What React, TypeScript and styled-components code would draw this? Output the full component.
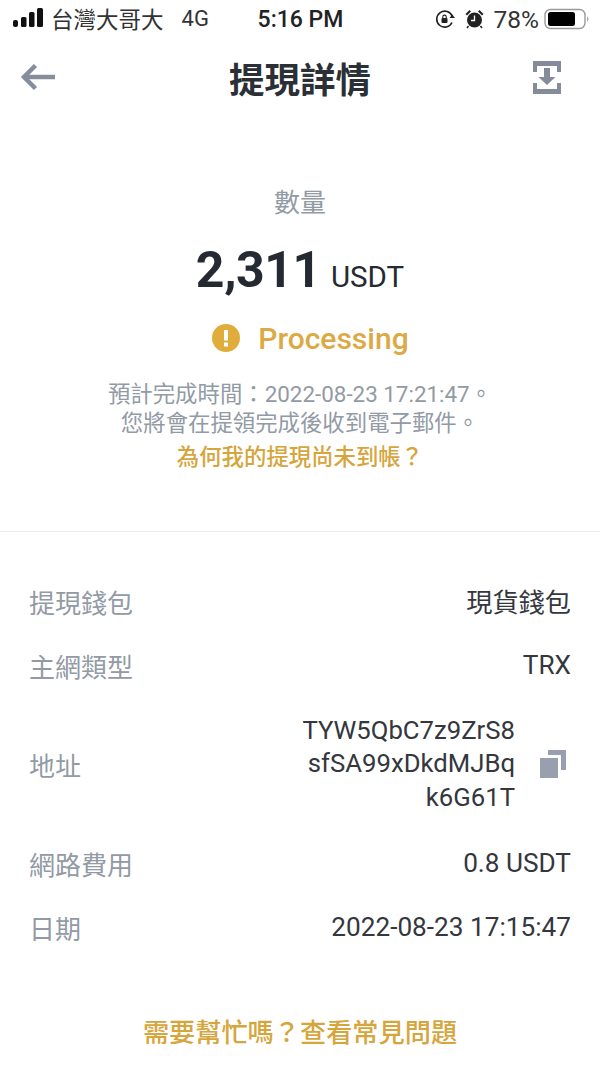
import React from 'react';
import styled, { createGlobalStyle } from 'styled-components';

const GlobalStyle = createGlobalStyle`
  html, body {
    margin: 0;
    padding: 0;
    background: #fff;
  }
  body {
    font-family: Roboto, 'Noto Sans CJK TC', sans-serif;
  }
`;

const Page = styled.div`
  width: 600px;
  height: 1065px;
  overflow: hidden;
  display: flex;
  flex-direction: column;
  background: #fff;
`;

const StatusBar = styled.div`
  height: 38px;
  padding: 0 11px 0 12px;
  display: grid;
  grid-template-columns: 1fr auto 1fr;
  align-items: center;
  color: #1a1a1c;
`;
const StatusLeft = styled.div`
  display: flex;
  align-items: center;
  color: #333;
`;
const Carrier = styled.span`
  margin: 0 0 3px 7px;
  font-family: 'Noto Sans CJK TC', sans-serif;
  font-size: 22.5px;
  line-height: 30px;
`;
const Network = styled.span`
  margin-left: 18px;
  font-size: 22px;
  line-height: 30px;
`;
const Clock = styled.div`
  font-size: 23px;
  font-weight: 500;
  color: #222;
`;
const StatusRight = styled.div`
  display: flex;
  align-items: center;
  justify-content: flex-end;
  gap: 10px;
  font-size: 24.5px;
  color: #333;
`;
const BatterySvg = styled.svg`
  margin-left: -5px;
`;

const Header = styled.header`
  height: 78px;
  padding: 0 20px;
  display: grid;
  grid-template-columns: 1fr auto 1fr;
  align-items: center;
`;
const HeaderAction = styled.div`
  padding-right: 19px;
  display: flex;
  justify-content: flex-end;
`;
const Title = styled.h1`
  margin: 0;
  font-family: 'Noto Sans CJK TC', sans-serif;
  font-size: 35.5px;
  font-weight: 700;
  color: #2b2f36;
`;
const Summary = styled.section`
  height: 416px;
  box-sizing: border-box;
  padding-top: 66px;
  display: flex;
  flex-direction: column;
  align-items: center;
  border-bottom: 1px solid #eaecef;
`;
const AmountLabel = styled.div`
  font-family: 'Noto Sans CJK TC', sans-serif;
  font-size: 26px;
  line-height: 38px;
  color: #929aa5;
`;
const Amount = styled.div`
  margin-top: 19px;
  height: 62px;
  display: flex;
  align-items: baseline;
  gap: 10px;
  color: #252932;
`;
const AmountValue = styled.span`
  font-size: 50px;
  line-height: 62px;
  font-weight: 700;
  letter-spacing: -0.4px;
`;
const AmountUnit = styled.span`
  font-size: 29.5px;
  font-weight: 400;
`;
const Status = styled.div`
  margin: 17px 0 0 21px;
  height: 40px;
  display: flex;
  align-items: center;
  gap: 18px;
  color: #dcaa45;
  font-size: 30px;
  font-weight: 500;
`;
const Note = styled.div`
  margin-top: 22px;
  font-size: 22.4px;
  line-height: 29px;
  color: #929aa5;
  text-align: center;
`;
const HelpLink = styled.div`
  font-family: 'Noto Sans CJK TC', sans-serif;
  font-size: 22.4px;
  line-height: 34px;
  font-weight: 500;
  color: #d6a53c;
`;

const Details = styled.section`
  padding: 37px 29px 0;
  display: flex;
  flex-direction: column;
`;
const Row = styled.div<{ $height: number }>`
  height: ${(p) => p.$height}px;
  display: flex;
  align-items: center;
  justify-content: space-between;
`;
const RowLabel = styled.span`
  font-family: 'Noto Sans CJK TC', sans-serif;
  font-size: 26px;
  color: #929aa5;
`;
const RowValue = styled.span`
  font-size: 26.2px;
  color: #34373d;
  text-align: right;
`;
const AddressWrap = styled.div`
  padding-right: 5px;
  display: flex;
  align-items: center;
  gap: 25px;
`;
const AddressText = styled(RowValue)`
  line-height: 33.5px;
  font-size: 25.7px;
`;
const Footer = styled.div`
  margin-top: 52px;
  text-align: center;
  font-family: 'Noto Sans CJK TC', sans-serif;
  font-size: 26.2px;
  font-weight: 500;
  line-height: 40px;
  color: #d6a53c;
`;

const SignalIcon = () => (
  <svg width="32" height="22" viewBox="0 0 32 22" fill="#111">
    <rect x="1" y="12" width="5" height="7" rx="2" />
    <rect x="9" y="9" width="5.500" height="10" rx="1.500" />
    <rect x="17" y="4" width="5.500" height="15" rx="1.500" />
    <rect x="25" y="0" width="6" height="19" rx="1.500" />
  </svg>
);

const RotationIcon = () => (
  <svg width="20" height="20" viewBox="0 0 20 20" fill="none" stroke="#222">
    <path d="M17 13.500A8 8 0 1 1 17.300 7.500" strokeWidth="1.600" />
    <path d="M14.500 9h5.500l-2.700-3.500z" fill="#222" stroke="none" />
    <rect x="6.500" y="9" width="6" height="5" rx="1" fill="#222" stroke="none" />
    <path d="M7.800 9V7.800a1.700 1.700 0 0 1 3.400 0V9" strokeWidth="1.100" />
  </svg>
);

const AlarmIcon = () => (
  <svg width="19" height="20" viewBox="0 0 19 20" fill="#222">
    <circle cx="9.500" cy="11" r="7.500" />
    <path d="M.5 5 4.500 1l1.500 1.500L2 6.500zM18.500 5l-4-4L13 2.500l4 4z" />
    <path d="M3.500 17 2 19M15.500 17l1.500 2" stroke="#222" strokeWidth="1.500" />
    <path d="M9.500 6.500v5H6" stroke="#fff" strokeWidth="1.300" fill="none" />
  </svg>
);

const BatteryIcon = () => (
  <BatterySvg width="45" height="22" viewBox="0 0 45 22">
    <rect x="1" y="1.500" width="40" height="19" rx="5.500" fill="none" stroke="#9a9a9a" strokeWidth="1.400" />
    <rect x="4" y="4" width="27" height="14" rx="2.500" fill="#000" />
    <path d="M43 8.500v5c1-.3 1.500-1.300 1.500-2.500s-.5-2.200-1.500-2.500z" fill="#aaa" />
  </BatterySvg>
);

const BackIcon = () => (
  <svg width="36" height="28" viewBox="0 0 36 28" fill="none" stroke="#868e9c" strokeWidth="4.500">
    <path d="M35 14H5" />
    <path d="M15.500 2.500 4 14l11.500 11.500" />
  </svg>
);

const ExportIcon = () => (
  <svg width="28" height="33" viewBox="0 0 28 33" fill="#868b99">
    <path d="M0 0h28v11h-4V5H4v6H0z" />
    <path d="M0 33h28V22h-4v6H4v-6H0z" />
    <path d="M11 7h6v9h5.500L14 24 5.500 16H11z" />
  </svg>
);

const WarningIcon = () => (
  <svg width="28" height="28" viewBox="0 0 28 28">
    <circle cx="14" cy="14" r="14" fill="#e0ad3c" />
    <rect x="12" y="6" width="4" height="10.500" fill="#fff" />
    <rect x="12" y="18.500" width="4" height="4" fill="#fff" />
  </svg>
);

const CopyIcon = () => (
  <svg width="26" height="28" viewBox="0 0 26 28" fill="#9a9fb0">
    <rect x="0" y="8" width="18" height="20" />
    <path d="M8 0h18v20h-5V5H8z" />
  </svg>
);

const App: React.FC = () => {
  return (
    <Page lang="zh-Hant">
      <GlobalStyle />
      <StatusBar>
        <StatusLeft>
          <SignalIcon />
          <Carrier>台灣大哥大</Carrier>
          <Network>4G</Network>
        </StatusLeft>
        <Clock>5:16 PM</Clock>
        <StatusRight>
          <RotationIcon />
          <AlarmIcon />
          <span>78%</span>
          <BatteryIcon />
        </StatusRight>
      </StatusBar>
      <Header>
        <BackIcon />
        <Title>提現詳情</Title>
        <HeaderAction>
          <ExportIcon />
        </HeaderAction>
      </Header>
      <Summary>
        <AmountLabel>數量</AmountLabel>
        <Amount>
          <AmountValue>2,311</AmountValue>
          <AmountUnit>USDT</AmountUnit>
        </Amount>
        <Status>
          <WarningIcon />
          Processing
        </Status>
        <Note>
          預計完成時間：2022-08-23 17:21:47。
          <br />
          您將會在提領完成後收到電子郵件。
        </Note>
        <HelpLink>為何我的提現尚未到帳？</HelpLink>
      </Summary>
      <Details>
        <Row $height={64}>
          <RowLabel>提現錢包</RowLabel>
          <RowValue>現貨錢包</RowValue>
        </Row>
        <Row $height={64}>
          <RowLabel>主網類型</RowLabel>
          <RowValue>TRX</RowValue>
        </Row>
        <Row $height={134}>
          <RowLabel>地址</RowLabel>
          <AddressWrap>
            <AddressText>
              TYW5QbC7z9ZrS8
              <br />
              sfSA99xDkdMJBq
              <br />
              k6G61T
            </AddressText>
            <CopyIcon />
          </AddressWrap>
        </Row>
        <Row $height={64}>
          <RowLabel>網路費用</RowLabel>
          <RowValue>0.8 USDT</RowValue>
        </Row>
        <Row $height={64}>
          <RowLabel>日期</RowLabel>
          <RowValue>2022-08-23 17:15:47</RowValue>
        </Row>
      </Details>
      <Footer>需要幫忙嗎？查看常見問題</Footer>
    </Page>
  );
};

export default App;
